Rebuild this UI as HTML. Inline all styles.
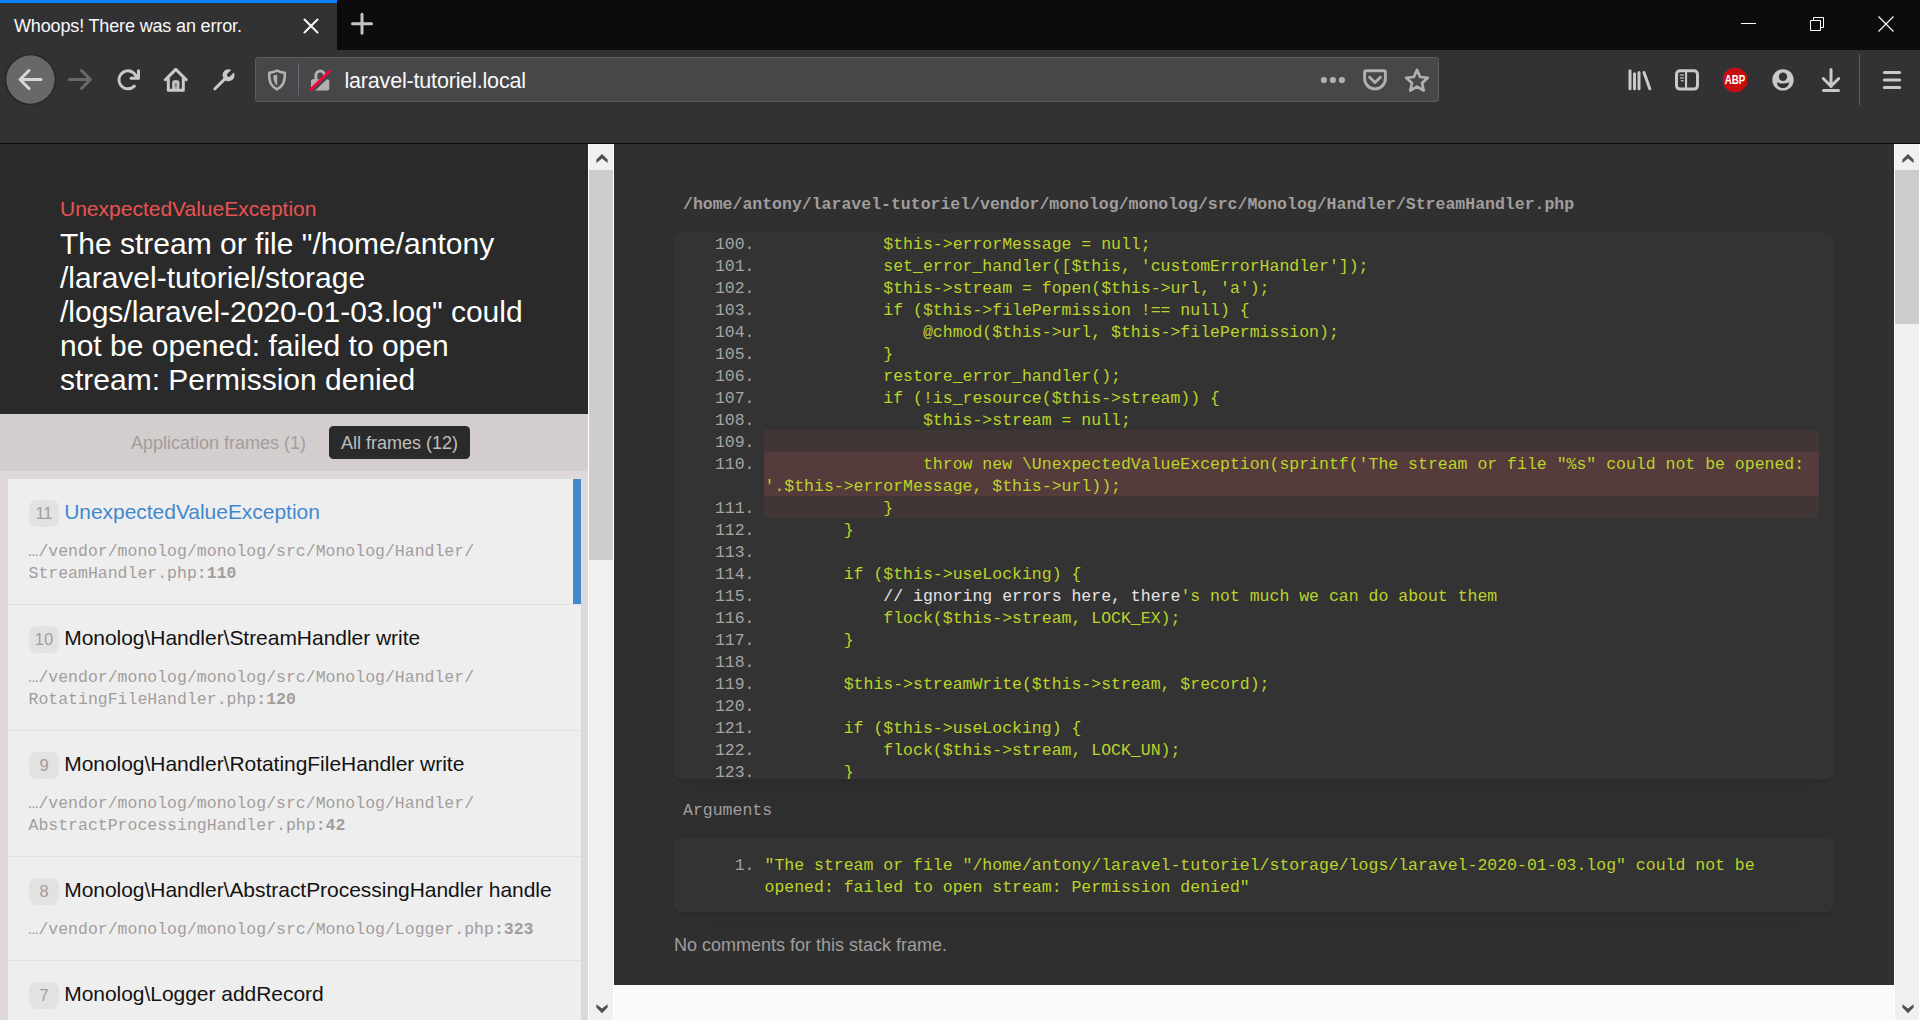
<!DOCTYPE html>
<html lang="en">
<head>
<meta charset="utf-8">
<title>Whoops! There was an error.</title>
<style>
*{box-sizing:border-box;}
html,body{margin:0;padding:0;}
body{width:1920px;height:1020px;overflow:hidden;position:relative;background:#303030;font-family:"Liberation Sans",sans-serif;color:#131313;}
.abs{position:absolute;}
svg{display:block;}
/* ---------- browser chrome ---------- */
#tabbar{position:absolute;left:0;top:0;width:1920px;height:50px;background:#0c0c0d;}
#tab{position:absolute;left:0;top:0;width:337px;height:50px;background:#323234;}
#tabline{position:absolute;left:0;top:0;width:337px;height:3px;background:#0a84ff;}
#tabtitle{position:absolute;left:14px;top:13.5px;font-size:18px;letter-spacing:-0.15px;line-height:24px;color:#f9f9fa;white-space:nowrap;}
#navbar{position:absolute;left:0;top:50px;width:1920px;height:93px;background:#323234;}
#navline{position:absolute;left:0;top:143px;width:1920px;height:1px;background:#0c0c0d;}
#urlbar{position:absolute;left:255px;top:57px;width:1184px;height:45px;background:#474749;border:1px solid #5c5c5e;border-radius:3px;}
#urltext{position:absolute;left:344.400px;top:67.5px;font-size:21.5px;letter-spacing:-0.17px;line-height:26px;color:#f9f9fa;white-space:nowrap;}
/* ---------- whoops left ---------- */
#lhead{position:absolute;left:0;top:144px;width:588px;height:270px;background:#2a2a2a;}
#exctitle{position:absolute;left:60px;top:196px;font-size:21px;line-height:25px;color:#e95353;white-space:nowrap;}
#excmsg{position:absolute;left:60px;top:227px;font-size:30px;line-height:34px;color:#fff;white-space:nowrap;}
#lbody{position:absolute;left:0;top:414px;width:588px;height:606px;background:#ded8d8;}
#fdesc{position:absolute;left:0;top:414px;width:588px;height:57px;background:#d3cdcd;}
.ftab{position:absolute;top:426px;height:33px;font-size:18px;line-height:35px;color:#a29d9d;white-space:nowrap;padding:0 12px;border-radius:4.5px;}
.ftab.on{background:#2a2a2a;color:#bebebe;}
.frame{position:absolute;left:8px;width:573px;background:#eeeeee;border-bottom:1px solid #e2e2e2;}
.frame.active{box-shadow:inset -8px 0 0 0 #4288ce;}
.fidx{position:absolute;left:21px;top:21px;width:30px;height:27px;border-radius:7.5px;background:#e2e2e2;color:#a29d9d;font-size:16.5px;line-height:27px;text-align:center;}
.fcls{position:absolute;left:56.200px;top:19.500px;font-size:21px;letter-spacing:-0.035px;line-height:25px;white-space:nowrap;color:#131313;}
.frame.active .fcls{color:#4288ce;}
.ffile{position:absolute;left:20.500px;top:62px;font-family:"Liberation Mono",monospace;font-size:16.5px;line-height:22px;color:#a29d9d;white-space:pre;}
.ffile b{font-weight:bold;}
/* scrollbars */
.sb{position:absolute;top:144px;width:26px;height:876px;background:#f0f0f0;border-left:1px solid #fff;border-right:1px solid #fff;}
.sb .th{position:absolute;left:0;top:26px;width:24px;background:#cdcdcd;}
.sb svg{position:absolute;left:6.5px;}
/* ---------- whoops right ---------- */
#rpanel{position:absolute;left:614px;top:144px;width:1280px;height:841px;background:#303030;}
#rbottom{position:absolute;left:614px;top:985px;width:1280px;height:35px;background:#fafafa;}
.mono{font-family:"Liberation Mono",monospace;font-size:16.5px;line-height:22px;white-space:pre;}
#fpath{position:absolute;left:683px;top:194px;color:#a29d9d;font-weight:bold;}
#code{position:absolute;left:674px;top:233px;width:1160px;height:546px;background:#333;border-radius:9px;overflow:hidden;box-shadow:0 4.5px 0 rgba(0,0,0,.05),0 15px 45px rgba(0,0,0,.05),inset 0 0 1.5px 0 rgba(255,255,255,.07);}
#code .ln{position:absolute;left:0;width:1160px;height:22px;}
#code .n{position:absolute;left:0;top:2px;width:80.5px;text-align:right;color:#a5a5a5;}
#code .c{position:absolute;left:90.5px;top:2px;color:#bcd42a;}
#code .hl{position:absolute;left:90px;width:1055px;}
#argl{position:absolute;left:683px;top:800px;color:#a29d9d;}
#args{position:absolute;left:674px;top:838px;width:1160px;height:74px;background:#333;border-radius:9px;box-shadow:0 4.5px 0 rgba(0,0,0,.05),0 15px 45px rgba(0,0,0,.05),inset 0 0 1.5px 0 rgba(255,255,255,.07);}
#args .n{position:absolute;left:0;top:17px;width:80.5px;text-align:right;color:#a5a5a5;}
#args .c{position:absolute;left:90.5px;top:17px;color:#bcd42a;}
#nocom{position:absolute;left:674px;top:934px;font-size:18px;line-height:22px;color:#a29d9d;white-space:nowrap;}
</style>
</head>
<body>
<!-- BROWSER CHROME -->
<div id="tabbar"></div>
<div id="tab"></div>
<div id="tabline"></div>
<div id="tabtitle">Whoops! There was an error.</div>
<div id="navbar"></div>
<div id="navline"></div>
<div id="urlbar"></div>
<div id="urltext">laravel-tutoriel.local</div>
<svg class="abs" style="left:0;top:0" width="1920" height="144" viewBox="0 0 1920 144">
<path d="M304.5 19.5 L317.5 32.5 M317.5 19.5 L304.5 32.5" stroke="#f6f6f7" stroke-width="2.100" stroke-linecap="round" fill="none"/>
<path d="M352.5 23.8 H371.5 M362 14.3 V33.3" stroke="#c4c4c5" stroke-width="3" stroke-linecap="round" fill="none"/>
<path d="M1741 23.5 H1756" stroke="#fff" stroke-width="1" fill="none"/>
<path d="M1810.5 20.5 H1820.5 V30.5 H1810.5 Z M1813.5 20.5 V17.5 H1823.5 V27.5 H1820.5" stroke="#fff" stroke-width="1" fill="none"/>
<path d="M1878.5 16.5 L1893.5 31.5 M1893.5 16.5 L1878.5 31.5" stroke="#fff" stroke-width="1.1" fill="none"/>
<circle cx="30.5" cy="79.5" r="24.800" fill="none" stroke="#252527" stroke-width="1.400"/><circle cx="30.5" cy="79.5" r="24.200" fill="#686869"/>
<path transform="translate(18.5 67.5) scale(1.5)" fill="#d8d8d9" d="M15 7H3.414l4.293-4.293a1 1 0 0 0-1.414-1.414l-6 6a1 1 0 0 0 0 1.414l6 6a1 1 0 0 0 1.414-1.414L3.414 9H15a1 1 0 0 0 0-2z"/>
<path transform="translate(92 67.5) scale(-1.5 1.5)" fill="#69696b" d="M15 7H3.414l4.293-4.293a1 1 0 0 0-1.414-1.414l-6 6a1 1 0 0 0 0 1.414l6 6a1 1 0 0 0 1.414-1.414L3.414 9H15a1 1 0 0 0 0-2z"/>
<path transform="translate(116 67.800) scale(1.5)" fill="#c9c9ca" d="M15 1a1 1 0 0 0-1 1v2.418A6.995 6.995 0 1 0 8 15a6.954 6.954 0 0 0 4.95-2.05 1 1 0 0 0-1.414-1.414A5.019 5.019 0 1 1 12.549 6H10a1 1 0 0 0 0 2h5a1 1 0 0 0 1-1V2a1 1 0 0 0-1-1z"/>
<g transform="translate(163.8 67.8) scale(1.5)" fill="#c9c9ca"><path d="M15.707 7.293l-7-7a1 1 0 0 0-1.414 0l-7 7a1 1 0 0 0 1.414 1.414L2 8.414V15a1 1 0 0 0 1 1h10a1 1 0 0 0 1-1V8.414l.293.293a1 1 0 0 0 1.414-1.414zM12 14H4V6.414l4-4 4 4z"/><path d="M5.600 14.200V9.700a1.400 1.400 0 0 1 1.400-1.400h2a1.400 1.400 0 0 1 1.400 1.400V14.200z" /><rect x="7" y="9.700" width="2" height="4.300" fill="#a4a4a6"/><rect x="7.600" y="11.300" width=".8" height=".8" fill="#38383a"/></g>
<path transform="translate(212 67.8) scale(1.5)" fill="#c9c9ca" d="M14.555 3.2l-2.434 2.436a1.243 1.243 0 1 1-1.757-1.757L12.8 1.445A3.956 3.956 0 0 0 11 1a3.976 3.976 0 0 0-3.434 6.020l-6.273 6.273a1 1 0 1 0 1.414 1.414L8.980 8.434A3.960 3.960 0 0 0 11 9a4 4 0 0 0 4-4 3.956 3.956 0 0 0-.445-1.800z"/>
<path d="M277 70.600 C274.600 71.900 271.800 72.600 269.200 72.900 C269.100 78.500 269.800 81.800 271.300 84.300 C272.700 86.600 274.600 88.200 277 89.400 C279.400 88.200 281.300 86.600 282.700 84.300 C284.200 81.800 284.900 78.500 284.800 72.900 C282.200 72.600 279.400 71.900 277 70.600 Z" fill="none" stroke="#b1b1b3" stroke-width="2.600" stroke-linejoin="round"/>
<path d="M277.200 74.400 C275.800 75 274.600 75.400 273.300 75.600 C273.300 80 274.500 83.600 277.200 85.900 Z" fill="#b1b1b3"/>
<rect x="298" y="63" width="1" height="32" fill="#5f6b7c"/>
<path d="M315.900 80 V75.300 a4.300 4.300 0 0 1 8.600 0 V80" fill="none" stroke="#b1b1b3" stroke-width="3"/>
<rect x="311" y="79.200" width="18.300" height="11.400" rx="1.800" fill="#b1b1b3"/>
<path d="M312.200 91.500 L331.500 73" stroke="#474749" stroke-width="2.600" stroke-linecap="round"/>
<path d="M310.700 89.500 L329.500 71.300" stroke="#ff0039" stroke-width="2.600" stroke-linecap="round"/>
<circle cx="1323.9" cy="80" r="3.100" fill="#b1b1b3"/>
<circle cx="1332.9" cy="80" r="3.100" fill="#b1b1b3"/>
<circle cx="1341.9" cy="80" r="3.100" fill="#b1b1b3"/>
<path d="M1366 70.700 H1384 a1.400 1.400 0 0 1 1.400 1.400 V78.500 a10.400 10.400 0 0 1 -20.800 0 V72.100 a1.400 1.400 0 0 1 1.400 -1.400 Z" fill="none" stroke="#b1b1b3" stroke-width="2.900"/>
<path d="M1369.600 77.200 L1375 82.500 L1380.400 77.200" fill="none" stroke="#b1b1b3" stroke-width="2.900" stroke-linecap="round" stroke-linejoin="round"/>
<path d="M1417.00 69.90 L1420.12 77.01 L1427.84 77.78 L1422.04 82.94 L1423.70 90.52 L1417.00 86.60 L1410.30 90.52 L1411.96 82.94 L1406.16 77.78 L1413.88 77.01 Z" fill="none" stroke="#b1b1b3" stroke-width="2.700" stroke-linejoin="round"/>
<path d="M1630 70.800 V88.800 M1634.500 73.800 V88.800 M1639 72.500 V88.800 M1644 72.500 L1649.800 88.800" stroke="#c9c9ca" stroke-width="3" stroke-linecap="round" fill="none"/>
<rect x="1676.500" y="70.700" width="21" height="18.400" rx="3.500" fill="none" stroke="#c9c9ca" stroke-width="3"/>
<rect x="1685" y="71" width="2.100" height="18" fill="#c9c9ca"/>
<path d="M1679.600 75 H1684 M1680 78 H1684 M1680.800 80.800 H1683.800" stroke="#a9a9aa" stroke-width="1.500" fill="none"/>
<path d="M1747.10 85.01 L1740.01 92.10 L1729.99 92.10 L1722.90 85.01 L1722.90 74.99 L1729.99 67.90 L1740.01 67.90 L1747.10 74.99 Z" fill="#c70d0e"/>
<text x="1735.100" y="84.300" text-anchor="middle" font-family="Liberation Sans, sans-serif" font-weight="bold" font-size="12.200" fill="#fff" textLength="20.500" lengthAdjust="spacingAndGlyphs">ABP</text>
<circle cx="1783" cy="79.900" r="10.700" fill="#c9c9ca"/>
<circle cx="1783" cy="76.800" r="4.200" fill="#323234"/>
<path d="M1777 82.300 Q1783 84.800 1789 82.300 C1789 90 1777 90 1777 82.300 Z" fill="#323234"/>
<path d="M1831 69.500 V86.500 M1823.300 78.500 L1831 86.300 L1838.700 78.500 M1823.500 90.400 H1838.500" stroke="#c9c9ca" stroke-width="3" stroke-linecap="round" stroke-linejoin="round" fill="none"/>
<rect x="1859" y="54" width="1" height="51" fill="#5c5c5e"/>
<path d="M1884.400 72.500 H1899.600 M1884.400 80 H1899.600 M1884.400 87.500 H1899.600" stroke="#c9c9ca" stroke-width="3.200" stroke-linecap="round" fill="none"/>
</svg>

<!-- WHOOPS LEFT -->
<div id="lhead"></div>
<div id="exctitle">UnexpectedValueException</div>
<div id="excmsg">The stream or file "/home/antony<br>/laravel-tutoriel/storage<br>/logs/laravel-2020-01-03.log" could<br>not be opened: failed to open<br>stream: Permission denied</div>
<div id="lbody"></div>
<div id="fdesc"></div>
<div class="ftab" style="left:119px;">Application frames (1)</div>
<div class="ftab on" style="left:329px;">All frames (12)</div>
<div class="frame active" style="top:479px;height:126px;"><div class="fidx">11</div><div class="fcls">UnexpectedValueException</div><div class="ffile">…/vendor/monolog/monolog/src/Monolog/Handler/
StreamHandler.php<b>:110</b></div></div>
<div class="frame" style="top:605px;height:126px;"><div class="fidx">10</div><div class="fcls">Monolog\Handler\StreamHandler write</div><div class="ffile">…/vendor/monolog/monolog/src/Monolog/Handler/
RotatingFileHandler.php<b>:120</b></div></div>
<div class="frame" style="top:731px;height:126px;"><div class="fidx">9</div><div class="fcls">Monolog\Handler\RotatingFileHandler write</div><div class="ffile">…/vendor/monolog/monolog/src/Monolog/Handler/
AbstractProcessingHandler.php<b>:42</b></div></div>
<div class="frame" style="top:857px;height:104px;"><div class="fidx">8</div><div class="fcls">Monolog\Handler\AbstractProcessingHandler handle</div><div class="ffile">…/vendor/monolog/monolog/src/Monolog/Logger.php<b>:323</b></div></div>
<div class="frame" style="top:961px;height:104px;"><div class="fidx">7</div><div class="fcls">Monolog\Logger addRecord</div><div class="ffile">…/vendor/monolog/monolog/src/Monolog/Logger.php<b>:307</b></div></div>

<!-- WHOOPS RIGHT -->
<div id="rpanel"></div>
<div id="rbottom"></div>
<div id="fpath" class="mono">/home/antony/laravel-tutoriel/vendor/monolog/monolog/src/Monolog/Handler/StreamHandler.php</div>
<div id="code" class="mono">
<div class="ln" style="top:-1px;height:22px"><div class="n">100.</div><div class="c">            $this-&gt;errorMessage = null;</div></div>
<div class="ln" style="top:21px;height:22px"><div class="n">101.</div><div class="c">            set_error_handler([$this, 'customErrorHandler']);</div></div>
<div class="ln" style="top:43px;height:22px"><div class="n">102.</div><div class="c">            $this-&gt;stream = fopen($this-&gt;url, 'a');</div></div>
<div class="ln" style="top:65px;height:22px"><div class="n">103.</div><div class="c">            if ($this-&gt;filePermission !== null) {</div></div>
<div class="ln" style="top:87px;height:22px"><div class="n">104.</div><div class="c">                @chmod($this-&gt;url, $this-&gt;filePermission);</div></div>
<div class="ln" style="top:109px;height:22px"><div class="n">105.</div><div class="c">            }</div></div>
<div class="ln" style="top:131px;height:22px"><div class="n">106.</div><div class="c">            restore_error_handler();</div></div>
<div class="ln" style="top:153px;height:22px"><div class="n">107.</div><div class="c">            if (!is_resource($this-&gt;stream)) {</div></div>
<div class="ln" style="top:175px;height:22px"><div class="n">108.</div><div class="c">                $this-&gt;stream = null;</div></div>
<div class="ln" style="top:197px;height:22px"><div class="hl" style="top:0;height:22px;background:rgba(255,100,100,.07)"></div><div class="n">109.</div><div class="c"></div></div>
<div class="ln" style="top:219px;height:44px"><div class="hl" style="top:0;height:44px;background:rgba(255,100,100,.17)"></div><div class="n">110.</div><div class="c">                throw new \UnexpectedValueException(sprintf('The stream or file "%s" could not be opened: 
'.$this-&gt;errorMessage, $this-&gt;url));</div></div>
<div class="ln" style="top:263px;height:22px"><div class="hl" style="top:0;height:22px;background:rgba(255,100,100,.07)"></div><div class="n">111.</div><div class="c">            }</div></div>
<div class="ln" style="top:285px;height:22px"><div class="n">112.</div><div class="c">        }</div></div>
<div class="ln" style="top:307px;height:22px"><div class="n">113.</div><div class="c"></div></div>
<div class="ln" style="top:329px;height:22px"><div class="n">114.</div><div class="c">        if ($this-&gt;useLocking) {</div></div>
<div class="ln" style="top:351px;height:22px"><div class="n">115.</div><div class="c">            <span style="color:#e9e4e5">// ignoring errors here, there</span>'s not much we can do about them</div></div>
<div class="ln" style="top:373px;height:22px"><div class="n">116.</div><div class="c">            flock($this-&gt;stream, LOCK_EX);</div></div>
<div class="ln" style="top:395px;height:22px"><div class="n">117.</div><div class="c">        }</div></div>
<div class="ln" style="top:417px;height:22px"><div class="n">118.</div><div class="c"></div></div>
<div class="ln" style="top:439px;height:22px"><div class="n">119.</div><div class="c">        $this-&gt;streamWrite($this-&gt;stream, $record);</div></div>
<div class="ln" style="top:461px;height:22px"><div class="n">120.</div><div class="c"></div></div>
<div class="ln" style="top:483px;height:22px"><div class="n">121.</div><div class="c">        if ($this-&gt;useLocking) {</div></div>
<div class="ln" style="top:505px;height:22px"><div class="n">122.</div><div class="c">            flock($this-&gt;stream, LOCK_UN);</div></div>
<div class="ln" style="top:527px;height:22px"><div class="n">123.</div><div class="c">        }</div></div>
</div>
<div id="argl" class="mono">Arguments</div>
<div id="args" class="mono"><div class="n">1.</div><div class="c">"The stream or file "/home/antony/laravel-tutoriel/storage/logs/laravel-2020-01-03.log" could not be
opened: failed to open stream: Permission denied"</div></div>
<div id="nocom">No comments for this stack frame.</div>
<div class="sb" style="left:588px"><svg width="12" height="10" viewBox="0 0 12 10" style="top:10px"><path d="M0.4 9 L0.4 5.600 L6 0 L11.600 5.600 L11.600 9 L6 4.600 Z" fill="#505050"/></svg><div class="th" style="height:390px"></div><svg width="12" height="10" viewBox="0 0 12 10" style="top:859.800px"><path d="M0.4 0.200 L0.4 3.600 L6 9.200 L11.600 3.600 L11.600 0.200 L6 4.600 Z" fill="#505050"/></svg></div>
<div class="sb" style="left:1894px"><svg width="12" height="10" viewBox="0 0 12 10" style="top:10px"><path d="M0.4 9 L0.4 5.600 L6 0 L11.600 5.600 L11.600 9 L6 4.600 Z" fill="#505050"/></svg><div class="th" style="height:154px"></div><svg width="12" height="10" viewBox="0 0 12 10" style="top:859.800px"><path d="M0.4 0.200 L0.4 3.600 L6 9.200 L11.600 3.600 L11.600 0.200 L6 4.600 Z" fill="#505050"/></svg></div>
</body>
</html>
